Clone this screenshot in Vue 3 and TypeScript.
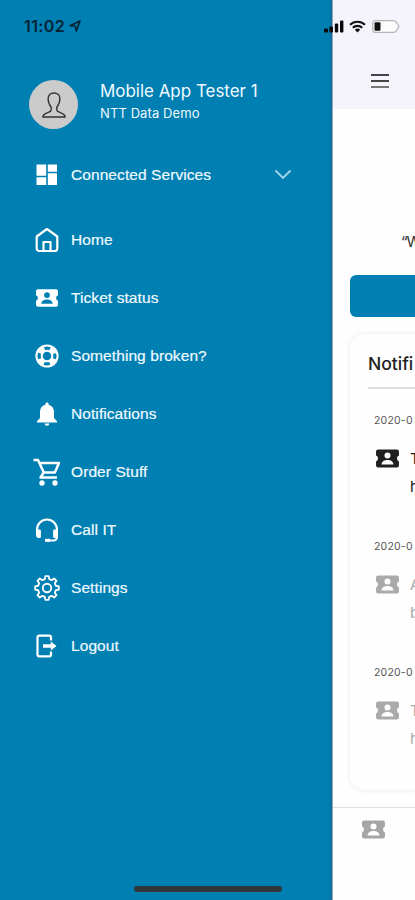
<script setup lang="ts">
interface MenuItem {
  label: string
  icon: string
}

interface Notice {
  date: string
  lines: [string, string]
  unread: boolean
}

const ticketPath =
  'M3 3.300h18a2 2 0 0 1 2 2v3.900a3 3 0 0 0 0 5.600v3.900a2 2 0 0 1-2 2H3a2 2 0 0 1-2-2v-3.900a3 3 0 0 0 0-5.600V5.300a2 2 0 0 1 2-2zM12 6.200a2.900 2.900 0 1 0 0 5.800 2.900 2.900 0 0 0 0-5.800zM6.300 17.700h11.400c0-2.900-3-4.300-5.700-4.300s-5.700 1.400-5.700 4.300z'

const items: MenuItem[] = [
  { label: 'Home', icon: 'home' },
  { label: 'Ticket status', icon: 'ticket' },
  { label: 'Something broken?', icon: 'help' },
  { label: 'Notifications', icon: 'bell' },
  { label: 'Order Stuff', icon: 'cart' },
  { label: 'Call IT', icon: 'headset' },
  { label: 'Settings', icon: 'gear' },
  { label: 'Logout', icon: 'logout' },
]

const notices: Notice[] = [
  { date: '2020-0', lines: ['T', 'h'], unread: true },
  { date: '2020-0', lines: ['A', 'b'], unread: false },
  { date: '2020-0', lines: ['T', 'h'], unread: false },
]

const teeth = 8
const gearPath = ((): string => {
  const points: string[] = []
  for (let i = 0; i < teeth; i++) {
    const base = (i * 2 * Math.PI) / teeth - Math.PI / 2
    const profile: [number, number][] = [[-0.25, 8.4], [-0.14, 11], [0.14, 11], [0.25, 8.4]]
    for (const [offset, radius] of profile) {
      const x = 12 + radius * Math.cos(base + offset)
      const y = 12 + radius * Math.sin(base + offset)
      points.push(`${x.toFixed(2)} ${y.toFixed(2)}`)
    }
  }
  return `M${points.join('L')}Z`
})()
</script>

<template>
  <div class="screen">
    <aside class="drawer">
      <header class="profile">
        <div class="avatar">
          <svg width="26" height="28" viewBox="0 0 26 28" fill="none" stroke="#333" stroke-width="1.4" stroke-linejoin="round">
            <path d="M10.2 16.2C8.2 13.8 7.1 10.800 7.100 7.800 7.100 4.300 9.500 2 13 2s5.900 2.300 5.900 5.800c0 3-1.100 6-3.100 8.400v2.700c0 1.600 2 2 4.100 2.900 2.500 1 4.100 1.900 4.300 4.200H1.800c.2-2.300 1.800-3.200 4.300-4.200 2.100-.9 4.100-1.300 4.100-2.900z" />
          </svg>
        </div>
        <div class="identity">
          <div class="name">Mobile App Tester 1</div>
          <div class="company">NTT Data Demo</div>
        </div>
      </header>

      <button class="row services" type="button">
        <svg class="icon" viewBox="0 0 24 24" fill="#fff">
          <path d="M1.500 1.500h9.700v11.200H1.500zM12.800 1.500h9.200v7.200h-9.200zM1.500 14.300h9.700V22H1.500zM12.800 10.300h9.200V22h-9.200z" />
        </svg>
        <span class="label">Connected Services</span>
        <svg class="chevron" width="18" height="11" viewBox="0 0 18 11" fill="none" stroke="#a5d3e8" stroke-width="1.900">
          <path d="M1.500 1.500 9 9l7.500-7.500" />
        </svg>
      </button>

      <nav class="menu">
        <a v-for="item in items" :key="item.icon" class="row">
          <svg v-if="item.icon === 'home'" class="icon" viewBox="0 0 24 24" fill="none" stroke="#fff" stroke-width="2.200" stroke-linejoin="round">
            <path d="M1.700 8.500 12 1l10.300 7.500v12a2.500 2.500 0 0 1-2.500 2.500H4.200a2.500 2.500 0 0 1-2.500-2.500z" />
            <path d="M8.500 23v-9h7v9" />
          </svg>
          <svg v-else-if="item.icon === 'ticket'" class="icon" viewBox="0 0 24 24" fill="#fff" fill-rule="evenodd">
            <path :d="ticketPath" />
          </svg>
          <svg v-else-if="item.icon === 'help'" class="icon" viewBox="0 0 24 24" fill="none" stroke="#fff">
            <circle cx="12" cy="12" r="10.600" stroke-width="2" />
            <circle cx="12" cy="12" r="5.300" stroke-width="2" />
            <circle cx="12" cy="12" r="8.200" stroke-width="5" stroke-dasharray="7 5.880" stroke-dashoffset="-2.940" />
          </svg>
          <svg v-else-if="item.icon === 'bell'" class="icon" viewBox="0 0 24 24" fill="#fff">
            <path d="M12 .5c1 0 1.700.7 1.700 1.700v.6c3.400.8 5.300 3.500 5.300 7.200v6l3 3.300v1.200H2v-1.200L5 16v-6c0-3.700 1.900-6.400 5.300-7.200v-.6C10.300 1.200 11 .5 12 .5zM9.700 21.500h4.600a2.300 2.300 0 0 1-4.600 0z" />
          </svg>
          <svg v-else-if="item.icon === 'cart'" class="icon cart" viewBox="0 0 28 28" fill="none" stroke="#fff" stroke-width="2.500" stroke-linejoin="round">
            <path d="M.5 2h4.500l5.800 12.500h11L26 5H6.300M10.800 14.500l-3.300 5h16.500" />
            <circle cx="9" cy="25" r="2.700" fill="#fff" stroke="none" />
            <circle cx="22" cy="25" r="2.700" fill="#fff" stroke="none" />
          </svg>
          <svg v-else-if="item.icon === 'headset'" class="icon" viewBox="0 0 24 24" fill="none" stroke="#fff" stroke-width="2.100">
            <path d="M2 15v-3.500a10 10 0 0 1 20 0V19a3.500 3.500 0 0 1-3.500 3.500H12" />
            <path d="M1 11.500h3.700a1.200 1.200 0 0 1 1.200 1.200v6.100a1.200 1.200 0 0 1-1.200 1.200H4a3 3 0 0 1-3-3zM23 11.500h-3.700a1.200 1.200 0 0 0-1.200 1.200v6.100a1.200 1.200 0 0 0 1.200 1.200h.700a3 3 0 0 0 3-3z" fill="#fff" stroke="none" />
            <path d="M10 22.300h5" stroke-width="3" />
          </svg>
          <svg v-else-if="item.icon === 'gear'" class="icon gear" viewBox="0 0 24 24" fill="none" stroke="#fff" stroke-width="1.700" stroke-linejoin="round">
            <path :d="gearPath" />
            <circle cx="12" cy="12" r="3.900" />
          </svg>
          <svg v-else class="icon" viewBox="0 0 24 24" fill="none" stroke="#fff" stroke-width="2.200">
            <path d="M16 6.500V3.500A1.800 1.800 0 0 0 14.200 1.700H4.300A1.800 1.800 0 0 0 2.500 3.500v17a1.800 1.800 0 0 0 1.800 1.800h9.900a1.800 1.800 0 0 0 1.800-1.800v-3" />
            <path d="M8 10.300h7.800V7.500L21.500 12l-5.700 4.500v-2.800H8z" fill="#fff" stroke="none" />
          </svg>
          <span class="label">{{ item.label }}</span>
        </a>
      </nav>
    </aside>

    <main class="page">
      <header class="page-header">
        <div class="burger"><i></i><i></i><i></i></div>
      </header>
      <p class="quote">“W</p>
      <div class="action"></div>
      <section class="card">
        <h2 class="card-title">Notifi</h2>
        <article v-for="(notice, index) in notices" :key="index" class="notice" :class="{ unread: notice.unread }">
          <time class="date">{{ notice.date }}</time>
          <div class="notice-body">
            <svg class="ticket" viewBox="0 0 24 24" fill="currentColor" fill-rule="evenodd"><path :d="ticketPath" /></svg>
            <div class="message">
              <div v-for="line in notice.lines" :key="line">{{ line }}</div>
            </div>
          </div>
        </article>
      </section>
      <footer class="tabs">
        <svg class="ticket" viewBox="0 0 24 24" fill="currentColor" fill-rule="evenodd"><path :d="ticketPath" /></svg>
      </footer>
    </main>

    <div class="status">
      <span class="time">11:02</span>
      <svg class="location" width="12" height="12" viewBox="0 0 12 12" fill="none" stroke="#062334" stroke-width="1.600" stroke-linejoin="round">
        <path d="M1 5.800 11 1 7.300 11 6.300 6z" />
      </svg>
      <svg class="signal" width="20" height="13" viewBox="0 0 20 13" fill="#080a0c">
        <rect x="0" y="8.500" width="4" height="4" rx="1" />
        <rect x="5.400" y="6.500" width="3.600" height="6" rx="1" />
        <rect x="10.800" y="3.500" width="3.400" height="9" rx="1" />
        <rect x="16" y="0.500" width="3.400" height="12" rx="1" />
      </svg>
      <svg class="wifi" width="17" height="13" viewBox="0 0 17 13" fill="none" stroke="#111" stroke-width="2.200">
        <path d="M1 4.800a10.800 10.800 0 0 1 15 0M3.800 7.800a6.700 6.700 0 0 1 9.400 0" />
        <path d="M5.800 9.700a4 4 0 0 1 5.400 0L8.500 12.500z" fill="#111" stroke="none" />
      </svg>
      <svg class="battery" width="28" height="13" viewBox="0 0 28 13">
        <path d="M3 .7h18.500a3 3 0 0 1 2.300 1L27 6.500l-3.200 4.800a3 3 0 0 1-2.300 1H3A2.300 2.300 0 0 1 .7 10V3A2.300 2.300 0 0 1 3 .7z" fill="#fcfcfc" stroke="#b5b5b8" stroke-width="1.200" />
        <rect x="2.500" y="2.300" width="6" height="8.400" rx="1" fill="#111" />
      </svg>
    </div>
    <div class="home-bar"></div>
  </div>
</template>

<style>
body {
  overflow: hidden;
}
</style>

<style scoped>
.screen {
  position: relative;
  display: flex;
  width: 415px;
  height: 900px;
  overflow: hidden;
  background: #fefefe;
  font-family: "Liberation Sans", Arial, sans-serif;
}
.drawer {
  flex: none;
  box-sizing: border-box;
  width: 333px;
  padding-top: 80px;
  background: #007fb2;
  border-right: 1px solid #8babbf;
  box-shadow: inset -2px 0 1px #176d9b;
  color: #effaff;
}
.profile {
  display: flex;
  height: 50px;
  padding-left: 29px;
}
.avatar {
  display: flex;
  align-items: center;
  justify-content: center;
  width: 49px;
  height: 49px;
  border-radius: 50%;
  background: #cbcbcb;
}
.identity {
  padding-left: 22px;
  font-family: Inter, sans-serif;
  white-space: nowrap;
}
.name {
  font-size: 17px;
  line-height: 23px;
  letter-spacing: -0.03px;
}
.company {
  font-size: 13px;
  line-height: 20px;
  letter-spacing: 0.1px;
}
.row {
  display: flex;
  align-items: center;
  height: 58px;
  padding: 0 0 0 35px;
}
.services {
  box-sizing: border-box;
  width: 100%;
  height: 65px;
  margin-top: 12px;
  border: 0;
  background: none;
  color: inherit;
  font: inherit;
}
.menu {
  padding-top: 4px;
}
.icon {
  flex: none;
  width: 24px;
  height: 24px;
}
.cart {
  width: 28px;
  height: 28px;
  margin: 0 -2px;
}
.gear {
  width: 26px;
  height: 26px;
  margin: 0 -1px;
}
.label {
  padding-left: 12px;
  font-size: 15.5px;
  letter-spacing: 0.08px;
  white-space: nowrap;
  -webkit-text-stroke: 0.2px currentColor;
}
.chevron {
  margin: 0 40px 0 auto;
}
.page {
  display: flex;
  flex-direction: column;
  flex: 1;
  min-width: 0;
  overflow: hidden;
  white-space: nowrap;
}
.page-header {
  box-sizing: border-box;
  height: 109px;
  padding: 74px 0 0 38px;
  background: #f5f4fc;
}
.burger {
  display: grid;
  gap: 4px;
  width: 18px;
}
.burger i {
  height: 2px;
  background: #444;
}
.burger i:last-child {
  background: #777;
}
.quote {
  margin: 123px 0 0 68px;
  height: 20px;
  font: 15px/20px Inter, sans-serif;
  letter-spacing: -1.2px;
  color: #333;
}
.action {
  flex: none;
  height: 42px;
  margin: 23px 0 0 17px;
  border-radius: 6px 0 0 6px;
  background: #007fb2;
}
.card {
  box-sizing: border-box;
  flex: none;
  height: 456px;
  margin: 17px 0 0 17px;
  padding: 15px 0 15px 18px;
  border-radius: 14px 0 0 14px;
  background: #fefefe;
  box-shadow: 0 0 4px 1px #eeefef;
}
.card-title {
  height: 38px;
  margin: 0 0 20px;
  border-bottom: 2px solid #dedede;
  color: #222;
  font: 500 17.5px/30px Inter, sans-serif;
}
.notice {
  height: 126px;
  color: #aaa;
}
.unread {
  color: #202020;
}
.date {
  display: block;
  padding-left: 6px;
  color: #555;
  font: 10.5px/24px Inter, sans-serif;
  letter-spacing: 0.2px;
}
.notice-body {
  display: flex;
  gap: 10px;
  padding: 12px 0 0 7px;
}
.ticket {
  flex: none;
  width: 25px;
  height: 25px;
}
.notice .ticket {
  margin-top: 1px;
}
.message {
  font: 15px/28px Inter, sans-serif;
}
.tabs {
  display: flex;
  padding: 9px 0 0 28px;
  margin-top: 17px;
  border-top: 1px solid #dedede;
  color: #a5a5a5;
}
.status {
  position: absolute;
  top: 16px;
  left: 24px;
  display: flex;
  align-items: center;
  width: 376px;
  height: 20px;
}
.time {
  width: 42px;
  font: 600 16px/20px Inter, sans-serif;
  letter-spacing: 0.4px;
  color: #062334;
}
.location {
  margin-left: 3px;
}
.signal {
  margin-left: auto;
}
.wifi {
  margin: 0 6px 0 5px;
}
.home-bar {
  position: absolute;
  bottom: 8px;
  left: 134px;
  width: 148px;
  height: 6px;
  border-radius: 3px;
  background: #303639;
}
</style>
